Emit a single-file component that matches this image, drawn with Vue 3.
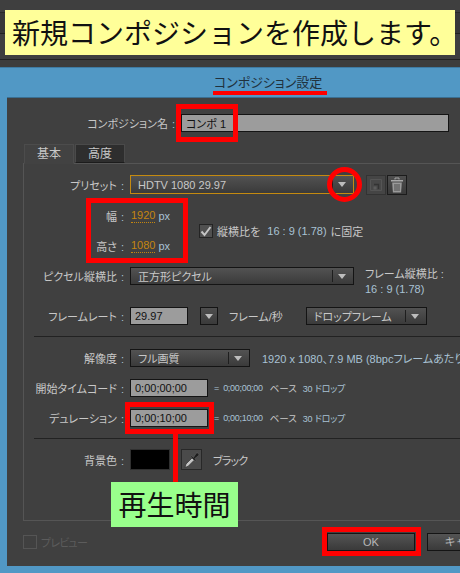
<template>
  <div class="page">
    <div class="top">
      <div class="banner">新規コンポジションを作成します。</div>
    </div>

    <div class="dialog">
      <div class="title-bar">
        <span class="title">コンポジション設定</span>
      </div>

      <div class="panel">
        <div class="name-row">
          <span class="label name-label">コンポジション名<i class="colon">:</i></span>
          <div class="field name-field">コンポ 1</div>
        </div>

        <div class="tabs">
          <div class="tab active">基本</div>
          <div class="tab">高度</div>
        </div>

        <div class="tab-body">
          <div class="row preset-row">
            <span class="label">プリセット<i class="colon">:</i></span>
            <div class="select preset-select">
              <span class="select-text">HDTV 1080 29.97</span>
              <span class="select-sep"></span>
              <span class="select-arrow"></span>
            </div>
            <button class="icon-btn disabled">
              <svg width="14" height="14" viewBox="0 0 14 14">
                <path d="M1.5 1.5h11v11h-11z" fill="#484848" stroke="#555" />
                <path d="M5 6.5h4.5v4.5" fill="none" stroke="#333" stroke-width="1.4" />
                <path d="M4.5 8.5h3v3h-3z" fill="#5c5c5c" />
              </svg>
            </button>
            <button class="icon-btn">
              <svg width="14" height="16" viewBox="0 0 14 16">
                <path d="M5 2.5V1h4v1.5" fill="none" stroke="#a8a8a8" stroke-width="1" />
                <path d="M1 3h12v1.5H1z" fill="#a8a8a8" />
                <path d="M2.2 5.5h9.6l-.7 10H2.9z" fill="#9a9a9a" />
                <path d="M5 7v7M7 7v7M9 7v7" stroke="#4c4c4c" stroke-width="1" />
              </svg>
            </button>
          </div>

          <div class="size-block">
            <div class="size-fields">
              <div class="row size-row">
                <span class="label">幅<i class="colon">:</i></span>
                <span class="link-value">1920</span>
                <span class="unit">px</span>
              </div>
              <div class="row size-row">
                <span class="label">高さ<i class="colon">:</i></span>
                <span class="link-value">1080</span>
                <span class="unit">px</span>
              </div>
            </div>
            <div class="lock">
              <span class="check">
                <svg width="12" height="11" viewBox="0 0 12 11">
                  <path d="M1.5 5.5 4.5 9 10.5 1" fill="none" stroke="#c4c4c4" stroke-width="2" />
                </svg>
              </span>
              <span class="plain">縦横比を</span>
              <span class="blue">16 : 9 (1.78)</span>
              <span class="plain">に固定</span>
            </div>
          </div>

          <div class="row pixel-row">
            <span class="label">ピクセル縦横比<i class="colon">:</i></span>
            <div class="select pixel-select">
              <span class="select-text">正方形ピクセル</span>
              <span class="select-sep"></span>
              <span class="select-arrow"></span>
            </div>
            <div class="frame-aspect">
              <span class="plain">フレーム縦横比 :</span>
              <span class="blue">16 : 9 (1.78)</span>
            </div>
          </div>

          <div class="row rate-row">
            <span class="label">フレームレート<i class="colon">:</i></span>
            <div class="field rate-field">29.97</div>
            <div class="mini-select"><span class="select-arrow"></span></div>
            <span class="plain per-sec">フレーム/秒</span>
            <div class="select drop-select">
              <span class="select-text">ドロップフレーム</span>
              <span class="select-sep"></span>
              <span class="select-arrow"></span>
            </div>
          </div>

          <div class="rule first-rule"></div>

          <div class="row res-row">
            <span class="label">解像度<i class="colon">:</i></span>
            <div class="select res-select">
              <span class="select-text">フル画質</span>
              <span class="select-sep"></span>
              <span class="select-arrow"></span>
            </div>
            <span class="blue res-info">1920 x 1080、7.9 MB (8bpcフレームあたり)</span>
          </div>

          <div v-for="t in timecodes" :key="t.label" class="row time-row">
            <span class="label">{{ t.label }}<i class="colon">:</i></span>
            <div class="field time-field">{{ t.value }}</div>
            <span class="blue time-info">= {{ t.value }}</span>
            <span class="plain time-base">ベース</span>
            <span class="blue time-drop">30 ドロップ</span>
          </div>

          <div class="rule second-rule"></div>

          <div class="row color-row">
            <span class="label">背景色<i class="colon">:</i></span>
            <div class="swatch"></div>
            <button class="dropper">
              <svg width="18" height="18" viewBox="0 0 18 18">
                <path d="M2 16.5 3 13l6-6 2.2 2.2-6 6z" fill="#c4c4c4" stroke="#222" stroke-width="0.6" />
                <path d="M8.5 5 10.5 6.5 13 2.5c.8-.8 2-.6 2.6.2.5.8.3 1.6-.4 2.2L11.8 7.5l1.4 1.8-1 .8-4.6-4.4z" fill="#1c1c1c" stroke="#6a6a6a" stroke-width="0.5" />
              </svg>
            </button>
            <span class="plain color-name">ブラック</span>
          </div>
        </div>

        <div class="footer">
          <label class="preview">
            <span class="preview-box"></span>
            <span class="preview-text">プレビュー</span>
          </label>
          <button class="btn ok">OK</button>
          <button class="btn cancel">キャンセル</button>
        </div>
      </div>
    </div>

    <!-- annotations drawn on top of the screenshot -->
    <div class="mark title-line"></div>
    <div class="mark box name-box"></div>
    <div class="mark ring"></div>
    <div class="mark box size-box"></div>
    <div class="mark box duration-box"></div>
    <div class="mark stem"></div>
    <div class="callout">再生時間</div>
    <div class="mark box ok-box"></div>
  </div>
</template>

<script setup>
const timecodes = [
  { label: '開始タイムコード', value: '0;00;00;00' },
  { label: 'デュレーション', value: '0;00;10;00' },
]
</script>

<style>
html,
body {
  margin: 0;
  background: #3c3c3c;
}
</style>

<style scoped>
.page {
  position: relative;
  width: 460px;
  height: 573px;
  overflow: hidden;
  display: flex;
  flex-direction: column;
  background: #3d3d3d;
  font-family: "Liberation Sans", "Noto Sans CJK JP", sans-serif;
  font-feature-settings: "palt";
  font-size: 11px;
  color: #c8c8c8;
}

.top {
  height: 67px;
  box-sizing: border-box;
  padding: 10px 5px 0;
  flex: none;
  background: linear-gradient(#3f3f3f 0 12px, #2a2a2a 12px 13px, #383838 13px 33px, #222 33px 34px, #3f3f3f 34px 59px, #222 59px 60px, #3d3d3d 60px);
}

.banner {
  height: 45px;
  background: #ffff99;
  color: #111;
  font-family: "Noto Sans CJK JP", sans-serif;
  font-feature-settings: normal;
  font-size: 28px;
  line-height: 45px;
  padding-left: 7px;
  box-sizing: border-box;
  white-space: nowrap;
}

.dialog {
  flex: 1;
  width: 536px;
  box-sizing: border-box;
  padding: 0 7px 7px;
  display: flex;
  flex-direction: column;
  background: #5198c5;
  border-top: 1px solid #3f7ba3;
}

.title-bar {
  height: 29px;
  flex: none;
  text-align: center;
  line-height: 29px;
  font-size: 13px;
  color: #20313d;
}

.panel {
  flex: 1;
  background: #404040;
  border-top: 1px solid #3a6f92;
  box-sizing: border-box;
  padding-top: 16px;
}

.label {
  width: 100px;
  flex: none;
  text-align: right;
  white-space: nowrap;
}

.colon {
  font-style: normal;
  color: #a9c2d4;
  margin-left: 4px;
}

.row {
  display: flex;
  align-items: center;
  white-space: nowrap;
}

.name-row {
  display: flex;
  align-items: center;
  height: 18px;
}

.name-label {
  width: 168px;
}

.field {
  box-sizing: border-box;
  background: #9c9c9c;
  border: 1px solid #141414;
  color: #111;
  display: flex;
  align-items: center;
  padding-left: 4px;
}

.name-field {
  width: 268px;
  height: 18px;
  margin-left: 6px;
}

.tabs {
  display: flex;
  gap: 1px;
  margin: 12px 0 0 17px;
  height: 19px;
}

.tab {
  width: 50px;
  height: 19px;
  box-sizing: border-box;
  text-align: center;
  line-height: 18px;
  font-size: 12px;
  background: #2e2e2e;
  border: 1px solid #4a4a4a;
  border-bottom-color: #1c1c1c;
}

.tab.active {
  background: #424242;
  border-color: #4c4c4c;
  border-bottom-color: #424242;
  margin-bottom: -1px;
  height: 20px;
  position: relative;
}

.tab-body {
  margin-left: 16px;
  height: 358px;
  box-sizing: border-box;
  border: 1px solid #555;
  padding-top: 11px;
}

.preset-row {
  height: 19px;
}

.select {
  box-sizing: border-box;
  height: 18px;
  display: flex;
  align-items: center;
  border: 1px solid #141414;
  background: linear-gradient(#525252, #3a3a3a);
  color: #c8c8c8;
  padding: 0 7px;
  margin-left: 6px;
  flex: none;
}

.select-text {
  flex: 1;
}

.select-sep {
  width: 1px;
  height: 12px;
  background: #1e1e1e;
  margin-right: 5px;
}

.select-arrow {
  width: 0;
  height: 0;
  border-left: 4px solid transparent;
  border-right: 4px solid transparent;
  border-top: 5px solid #bdbdbd;
}

.preset-select {
  width: 224px;
  height: 19px;
  border-color: #c48a10;
  margin-right: 12px;
}

.icon-btn {
  width: 20px;
  height: 20px;
  padding: 0;
  margin: 0 1px 0 0;
  display: flex;
  align-items: center;
  justify-content: center;
  background: linear-gradient(#4e4e4e, #3a3a3a);
  border: 1px solid #1c1c1c;
}

.icon-btn.disabled {
  background: #454545;
  border-color: #333;
}

.size-block {
  display: flex;
  align-items: center;
  margin-top: 12px;
}

.size-fields {
  display: flex;
  flex-direction: column;
  gap: 10px;
}

.size-row {
  height: 20px;
}

.link-value {
  margin-left: 7px;
  color: #c4860f;
  border-bottom: 1px dotted #c4860f;
  line-height: 13px;
}

.unit {
  margin-left: 3px;
  color: #a9c2d4;
}

.lock {
  display: flex;
  align-items: center;
  margin-left: 29px;
}

.check {
  width: 12px;
  height: 12px;
  margin-right: 4px;
  display: flex;
  align-items: center;
  justify-content: center;
  background: #505050;
  border: 1px solid #242424;
}

.plain {
  color: #c8c8c8;
}

.blue {
  color: #a9c2d4;
}

.lock .blue {
  margin: 0 4px 0 7px;
}

.pixel-row {
  margin-top: 11px;
  height: 18px;
}

.pixel-select {
  width: 224px;
}

.frame-aspect {
  display: flex;
  flex-direction: column;
  align-self: flex-start;
  margin-left: 11px;
  height: 30px;
  line-height: 15px;
}

.rate-row {
  margin-top: 22px;
  height: 18px;
}

.rate-field {
  width: 58px;
  height: 18px;
  margin-left: 6px;
}

.mini-select {
  width: 18px;
  height: 18px;
  box-sizing: border-box;
  margin-left: 12px;
  display: flex;
  align-items: center;
  justify-content: center;
  background: linear-gradient(#4e4e4e, #3a3a3a);
  border: 1px solid #141414;
}

.per-sec {
  margin-left: 11px;
}

.drop-select {
  width: 121px;
  margin-left: 23px;
  height: 18px;
}

.rule {
  height: 1px;
  background: #222;
  margin-left: 10px;
}

.first-rule {
  margin-top: 11px;
}

.res-row {
  margin-top: 12px;
  height: 18px;
}

.res-select {
  width: 120px;
}

.res-info {
  margin-left: 12px;
}

.time-row {
  margin-top: 12px;
  height: 18px;
}

.time-field {
  width: 78px;
  height: 18px;
  margin-left: 6px;
}

.time-info {
  margin-left: 6px;
  font-size: 9px;
  letter-spacing: -0.3px;
  word-spacing: 2px;
}

.time-base {
  margin-left: 7px;
  font-size: 9.5px;
}

.time-drop {
  margin-left: 6px;
  font-size: 9px;
  letter-spacing: -0.2px;
}

.second-rule {
  margin-top: 11px;
}

.color-row {
  margin-top: 10px;
  height: 21px;
}

.swatch {
  width: 40px;
  height: 21px;
  box-sizing: border-box;
  margin-left: 6px;
  background: #000;
  border: 1px solid #303030;
}

.dropper {
  width: 21px;
  height: 21px;
  box-sizing: border-box;
  padding: 0;
  margin-left: 11px;
  display: flex;
  align-items: center;
  justify-content: center;
  background: #4a4a4a;
  border: 1px solid #282828;
}

.color-name {
  margin-left: 11px;
  letter-spacing: -0.8px;
}

.footer {
  display: flex;
  align-items: center;
  margin: 12px 0 0 16px;
  height: 18px;
}

.preview {
  width: 304px;
  display: flex;
  align-items: center;
  gap: 4px;
  color: #5c5c5c;
}

.preview-box {
  width: 12px;
  height: 12px;
  border: 1px solid #555;
}

.preview-text {
  letter-spacing: -0.8px;
}

.btn {
  height: 18px;
  box-sizing: border-box;
  padding: 0;
  color: #b8b8b8;
  font-family: inherit;
  font-size: 11px;
  line-height: 14px;
  background: linear-gradient(#545454, #3a3a3a);
  border: 1px solid #141414;
}

.ok {
  width: 88px;
  flex: none;
}

.cancel {
  width: 90px;
  flex: none;
  margin-left: 12px;
}

.mark {
  position: absolute;
  box-sizing: border-box;
}

.box {
  border: 5px solid #ff0000;
}

.title-line {
  left: 213px;
  top: 91px;
  width: 114px;
  height: 4px;
  background: #ff0000;
}

.name-box {
  left: 176px;
  top: 104px;
  width: 62px;
  height: 38px;
}

.ring {
  left: 327px;
  top: 167px;
  width: 35px;
  height: 35px;
  border: 5px solid #ff0000;
  border-radius: 50%;
}

.size-box {
  left: 86px;
  top: 198px;
  width: 102px;
  height: 65px;
}

.duration-box {
  left: 125px;
  top: 402px;
  width: 89px;
  height: 32px;
}

.stem {
  left: 173px;
  top: 433px;
  width: 5px;
  height: 50px;
  background: #ff0000;
}

.callout {
  position: absolute;
  left: 111px;
  top: 482px;
  width: 127px;
  height: 45px;
  background: #99ff8c;
  color: #111;
  font-family: "Noto Sans CJK JP", sans-serif;
  font-size: 28px;
  line-height: 45px;
  text-align: center;
}

.ok-box {
  left: 322px;
  top: 527px;
  width: 99px;
  height: 29px;
}
</style>
